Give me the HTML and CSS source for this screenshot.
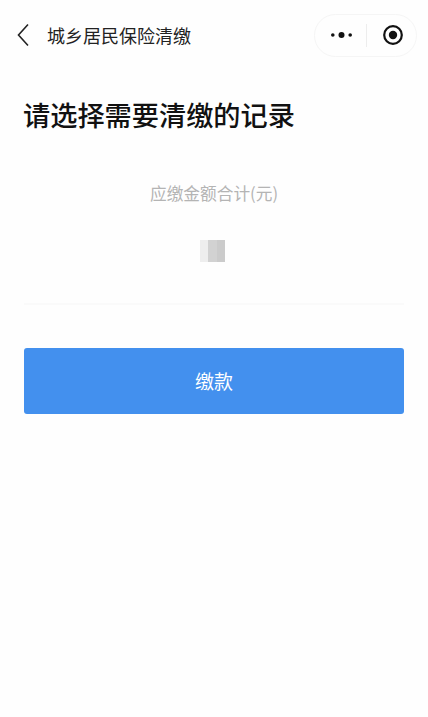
FILE: index.html
```html
<!DOCTYPE html>
<html lang="zh-CN">
<head>
    <meta charset="UTF-8">
    <meta name="viewport" content="width=device-width, initial-scale=1.0">
    <title>城乡居民保险清缴</title>
    <link rel="stylesheet" href="styles.css">
</head>
<body>
    <div class="page">
        <div class="nav">
            <svg class="nav-back" width="12" height="24" viewBox="0 0 12 24">
                <path d="M11 1.5 L1.5 12 L11 22.5" fill="none" stroke="#222" stroke-width="1.6"/>
            </svg>
            <span class="nav-title">城乡居民保险清缴</span>
            <div class="capsule">
                <svg class="capsule-more" width="21" height="8" viewBox="0 0 21 8">
                    <circle cx="1.8" cy="4" r="1.8" fill="#111"/>
                    <circle cx="10.5" cy="4" r="3" fill="#111"/>
                    <circle cx="19.2" cy="4" r="1.8" fill="#111"/>
                </svg>
                <span class="capsule-line"></span>
                <svg class="capsule-close" width="20" height="20" viewBox="0 0 20 20">
                    <circle cx="10" cy="10" r="8.8" fill="none" stroke="#111" stroke-width="2.2"/>
                    <circle cx="10" cy="10" r="4.2" fill="#111"/>
                </svg>
            </div>
        </div>

        <h1 class="heading">请选择需要清缴的记录</h1>

        <div class="summary">
            <div class="summary-label">应缴金额合计(元)</div>
            <div class="summary-amount">
                <span class="blur-a"></span>
                <span class="blur-b"></span>
                <span class="blur-c"></span>
            </div>
        </div>

        <div class="action">
            <button class="pay-btn">缴款</button>
        </div>
    </div>
</body>
</html>
```
FILE: styles.css
```css
* {
    margin: 0;
    padding: 0;
    box-sizing: border-box;
}

html, body {
    height: 100%;
}

body {
    font-family: "Noto Sans CJK SC", "Noto Sans", sans-serif;
    background: #fefefe;
    color: #1a1a1a;
    overflow: hidden;
}

.page {
    height: 100%;
}

.nav {
    display: flex;
    align-items: center;
    height: 70px;
    padding: 0 11px 0 17px;
}

.nav-back {
    flex: none;
}

.nav-title {
    flex: 1;
    margin-left: 18px;
    font-size: 18px;
    color: #222;
}

.capsule {
    display: flex;
    align-items: center;
    width: 103px;
    height: 43px;
    border: 1px solid #f5f5f5;
    border-radius: 22px;
    background: #fefefe;
}

.capsule-more {
    margin-left: 16px;
}

.capsule-line {
    width: 1px;
    height: 23px;
    margin-left: 14px;
    background: #ededed;
}

.capsule-close {
    margin-left: 16px;
}

.heading {
    padding: 24px 23px 0;
    font-size: 27.2px;
    font-weight: 500;
    line-height: 40px;
    color: #111;
}

.summary {
    height: 171px;
    margin: 0 24px;
    padding-top: 46px;
    border-bottom: 2px solid #fafafa;
    text-align: center;
}

.summary-label {
    font-size: 16.7px;
    line-height: 26px;
    color: #b4b4b4;
}

.summary-amount {
    display: flex;
    justify-content: center;
    margin-top: 34px;
    padding-right: 3px;
}

.summary-amount span {
    width: 8.3px;
    height: 22px;
    filter: blur(0.5px);
}

.blur-a {
    background: #eeeeee;
}

.blur-b {
    background: #d2d2d2;
}

.blur-c {
    background: #cbcbcb;
}

.action {
    padding: 43px 24px 0;
}

.pay-btn {
    display: block;
    width: 100%;
    height: 66px;
    padding-bottom: 2px;
    border: none;
    border-radius: 3px;
    background: #4390ee;
    color: #fff;
    font-family: inherit;
    font-size: 19px;
}
```
